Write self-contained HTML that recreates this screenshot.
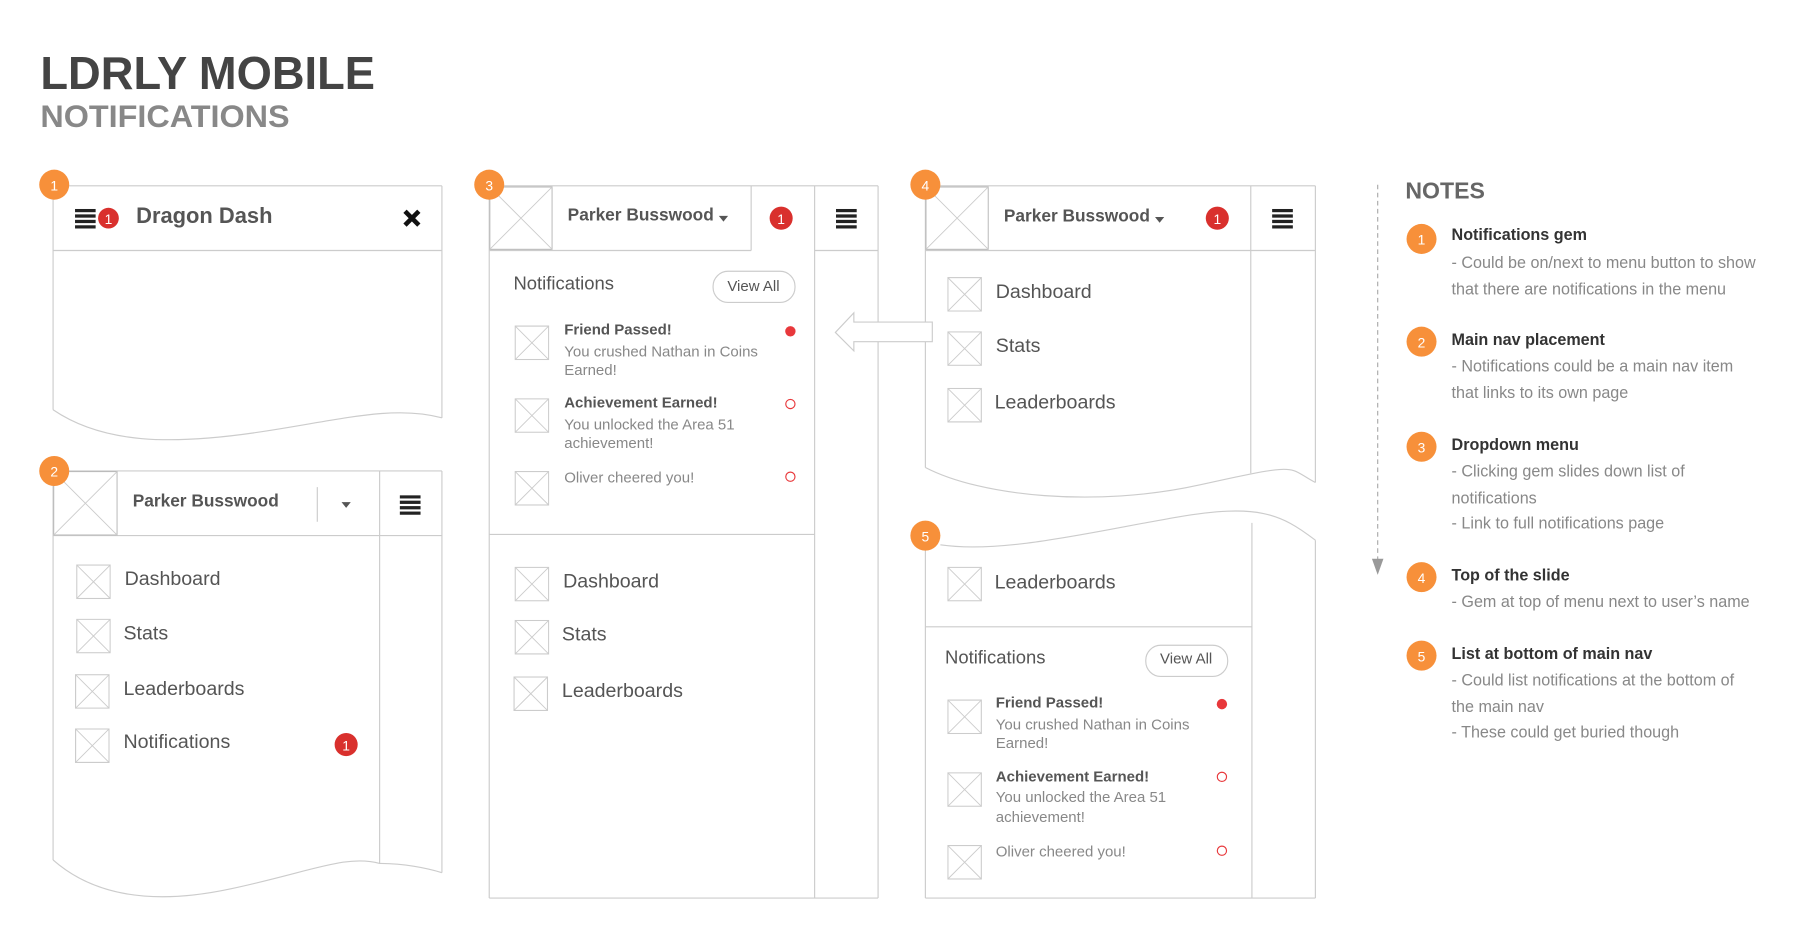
<!DOCTYPE html>
<html><head><meta charset="utf-8"><style>
html,body{margin:0;padding:0;background:#fff;width:1800px;height:950px;overflow:hidden}
svg{display:block}
text{font-family:"Liberation Sans",sans-serif}
</style></head><body>
<svg width="1800" height="950" viewBox="0 0 1560 823" preserveAspectRatio="none" xmlns="http://www.w3.org/2000/svg">
<defs>
<symbol id="ph" viewBox="0 0 30 30"><rect x="0.5" y="0.5" width="29" height="29" fill="none" stroke="#ccc"/><path d="M0.5 0.5L29.5 29.5M29.5 0.5L0.5 29.5" stroke="#ccc" stroke-width="0.8"/></symbol>
<symbol id="av" viewBox="0 0 56 56"><rect x="0.5" y="0.5" width="55" height="55" fill="none" stroke="#bbb"/><path d="M0.5 0.5L55.5 55.5M55.5 0.5L0.5 55.5" stroke="#ccc" stroke-width="0.8"/></symbol>
<symbol id="hb" viewBox="0 0 19 18"><rect x="0" y="0" width="19" height="3" fill="#222"/><rect x="0" y="5" width="19" height="3" fill="#222"/><rect x="0" y="10" width="19" height="3" fill="#222"/><rect x="0" y="15" width="19" height="3" fill="#222"/></symbol>
</defs>
<g fill="none" stroke="#ccc" stroke-width="1">
<path d="M46 161H383M46 217H383M46 161V355M383 161V362"/>
<path d="M46 355C90 385 150 385 220 375S340 350 383 362"/>
<path d="M46 408H383M46 464H383M46 408V745M383 408V756M329 408V748"/>
<path d="M46 745C80 775 130 785 200 770S300 740 329 748C350 748 370 752 383 756"/>
<path d="M275 422V452"/>
<path d="M424 161H761M424 217H651M706 217H761M651 161V217M706 161V778M424 161V778M761 161V778M424 778H761M424 463H706"/>
<path d="M802 161H1140M802 217H1140M802 161V405M1140 161V418M1084 161V410"/>
<path d="M802 405C850 430 950 440 1040 420S1115 405 1140 418"/>
<path d="M815 472C870 480 950 460 1020 448S1110 445 1140 468"/>
<path d="M802 470V778M1085 453V778M1140 468V778M802 778H1140M802 543H1085"/>
</g>
<path d="M724 288L740 271V279H808V296H740V304Z" fill="#fff" stroke="#ccc"/>
<text x="35" y="77" font-size="40" font-weight="bold" fill="#444" textLength="290" lengthAdjust="spacingAndGlyphs">LDRLY MOBILE</text>
<text x="35" y="110" font-size="27" font-weight="bold" fill="#888" textLength="216" lengthAdjust="spacingAndGlyphs">NOTIFICATIONS</text>

<use href="#hb" x="65" y="181" width="18" height="17"/>
<circle cx="94" cy="189" r="9" fill="#d9302d"/><text x="94" y="194" font-size="12" fill="#fff" text-anchor="middle">1</text>
<text x="118" y="193" font-size="19" font-weight="bold" fill="#555">Dragon Dash</text>
<path d="M351 183L363 195M363 183L351 195" stroke="#111" stroke-width="4"/>

<use href="#av" x="46" y="408" width="56" height="56"/>
<text x="115" y="439" font-size="15" font-weight="bold" fill="#555">Parker Busswood</text>
<path d="M296 435H304L300 440Z" fill="#555"/>
<use href="#hb" x="346" y="429" width="19" height="17"/>
<use href="#ph" x="66" y="489" width="30" height="30"/><text x="108" y="507" font-size="17" fill="#555">Dashboard</text>
<use href="#ph" x="66" y="536" width="30" height="30"/><text x="107" y="554" font-size="17" fill="#555">Stats</text>
<use href="#ph" x="65" y="584" width="30" height="30"/><text x="107" y="602" font-size="17" fill="#555">Leaderboards</text>
<use href="#ph" x="65" y="631" width="30" height="30"/><text x="107" y="648" font-size="17" fill="#555">Notifications</text>
<circle cx="300" cy="645" r="10" fill="#d9302d"/><text x="300" y="650" font-size="12" fill="#fff" text-anchor="middle">1</text>

<use href="#av" x="424" y="161" width="55" height="56"/>
<text x="492" y="191" font-size="15" font-weight="bold" fill="#555">Parker Busswood</text>
<path d="M623 187H631L627 192Z" fill="#555"/>
<circle cx="677" cy="189" r="10" fill="#d9302d"/><text x="677" y="194" font-size="12" fill="#fff" text-anchor="middle">1</text>
<use href="#hb" x="724" y="181" width="19" height="17"/>
<text x="445" y="251" font-size="16" fill="#555">Notifications</text>
<rect x="618" y="235" width="71" height="27" rx="13" fill="#fff" stroke="#ccc"/>
<text x="653" y="252" font-size="13" fill="#555" text-anchor="middle">View All</text>
<use href="#ph" x="446" y="282" width="30" height="30"/>
<text x="489" y="290" font-size="13" font-weight="bold" fill="#555">Friend Passed!</text>
<text x="489" y="309" font-size="13" fill="#888">You crushed Nathan in Coins</text>
<text x="489" y="325" font-size="13" fill="#888">Earned!</text>
<circle cx="685" cy="287" r="4.5" fill="#e8383b"/>
<use href="#ph" x="446" y="345" width="30" height="30"/>
<text x="489" y="353" font-size="13" font-weight="bold" fill="#555">Achievement Earned!</text>
<text x="489" y="372" font-size="13" fill="#888">You unlocked the Area 51</text>
<text x="489" y="388" font-size="13" fill="#888">achievement!</text>
<circle cx="685" cy="350" r="4" fill="none" stroke="#e8383b"/>
<use href="#ph" x="446" y="408" width="30" height="30"/>
<text x="489" y="418" font-size="13" fill="#888">Oliver cheered you!</text>
<circle cx="685" cy="413" r="4" fill="none" stroke="#e8383b"/>
<use href="#ph" x="446" y="491" width="30" height="30"/><text x="488" y="509" font-size="17" fill="#555">Dashboard</text>
<use href="#ph" x="446" y="537" width="30" height="30"/><text x="487" y="555" font-size="17" fill="#555">Stats</text>
<use href="#ph" x="445" y="586" width="30" height="30"/><text x="487" y="604" font-size="17" fill="#555">Leaderboards</text>

<use href="#av" x="802" y="161" width="55" height="56"/>
<text x="870" y="192" font-size="15" font-weight="bold" fill="#555">Parker Busswood</text>
<path d="M1001 188H1009L1005 193Z" fill="#555"/>
<circle cx="1055" cy="189" r="10" fill="#d9302d"/><text x="1055" y="194" font-size="12" fill="#fff" text-anchor="middle">1</text>
<use href="#hb" x="1102" y="181" width="19" height="17"/>
<use href="#ph" x="821" y="240" width="30" height="30"/><text x="863" y="258" font-size="17" fill="#555">Dashboard</text>
<use href="#ph" x="821" y="287" width="30" height="30"/><text x="863" y="305" font-size="17" fill="#555">Stats</text>
<use href="#ph" x="821" y="336" width="30" height="30"/><text x="862" y="354" font-size="17" fill="#555">Leaderboards</text>

<use href="#ph" x="821" y="491" width="30" height="30"/><text x="862" y="510" font-size="17" fill="#555">Leaderboards</text>
<text x="819" y="575" font-size="16" fill="#555">Notifications</text>
<rect x="993" y="559" width="71" height="27" rx="13" fill="#fff" stroke="#ccc"/>
<text x="1028" y="575" font-size="13" fill="#555" text-anchor="middle">View All</text>
<use href="#ph" x="821" y="606" width="30" height="30"/>
<text x="863" y="613" font-size="13" font-weight="bold" fill="#555">Friend Passed!</text>
<text x="863" y="632" font-size="13" fill="#888">You crushed Nathan in Coins</text>
<text x="863" y="648" font-size="13" fill="#888">Earned!</text>
<circle cx="1059" cy="610" r="4.5" fill="#e8383b"/>
<use href="#ph" x="821" y="669" width="30" height="30"/>
<text x="863" y="677" font-size="13" font-weight="bold" fill="#555">Achievement Earned!</text>
<text x="863" y="695" font-size="13" fill="#888">You unlocked the Area 51</text>
<text x="863" y="712" font-size="13" fill="#888">achievement!</text>
<circle cx="1059" cy="673" r="4" fill="none" stroke="#e8383b"/>
<use href="#ph" x="821" y="732" width="30" height="30"/>
<text x="863" y="742" font-size="13" fill="#888">Oliver cheered you!</text>
<circle cx="1059" cy="737" r="4" fill="none" stroke="#e8383b"/>

<g fill="#f7903a"><circle cx="47" cy="160" r="13"/><circle cx="47" cy="408" r="13"/><circle cx="424" cy="160" r="13"/><circle cx="802" cy="160" r="13"/><circle cx="802" cy="464" r="13"/></g>
<g font-size="12" fill="#fff" text-anchor="middle"><text x="47" y="165">1</text><text x="47" y="413">2</text><text x="424" y="165">3</text><text x="802" y="165">4</text><text x="802" y="469">5</text></g>

<path d="M1194 160V485" stroke="#aaa" stroke-dasharray="4 3"/>
<path d="M1189 484H1199L1194 498Z" fill="#999"/>
<text x="1218" y="172" font-size="20" font-weight="bold" fill="#666">NOTES</text>
<g fill="#f7903a"><circle cx="1232" cy="207" r="13"/><circle cx="1232" cy="296" r="13"/><circle cx="1232" cy="387" r="13"/><circle cx="1232" cy="500" r="13"/><circle cx="1232" cy="568" r="13"/></g>
<g font-size="12" fill="#fff" text-anchor="middle"><text x="1232" y="212">1</text><text x="1232" y="301">2</text><text x="1232" y="392">3</text><text x="1232" y="505">4</text><text x="1232" y="573">5</text></g>
<g font-size="14" font-weight="bold" fill="#333">
<text x="1258" y="208">Notifications gem</text>
<text x="1258" y="299">Main nav placement</text>
<text x="1258" y="390">Dropdown menu</text>
<text x="1258" y="503">Top of the slide</text>
<text x="1258" y="571">List at bottom of main nav</text>
</g>
<g font-size="14" fill="#888">
<text x="1258" y="232">- Could be on/next to menu button to show</text>
<text x="1258" y="255">that there are notifications in the menu</text>
<text x="1258" y="322">- Notifications could be a main nav item</text>
<text x="1258" y="345">that links to its own page</text>
<text x="1258" y="413">- Clicking gem slides down list of</text>
<text x="1258" y="436">notifications</text>
<text x="1258" y="458">- Link to full notifications page</text>
<text x="1258" y="526">- Gem at top of menu next to user’s name</text>
<text x="1258" y="594">- Could list notifications at the bottom of</text>
<text x="1258" y="617">the main nav</text>
<text x="1258" y="639">- These could get buried though</text>
</g>
</svg>
</body></html>
